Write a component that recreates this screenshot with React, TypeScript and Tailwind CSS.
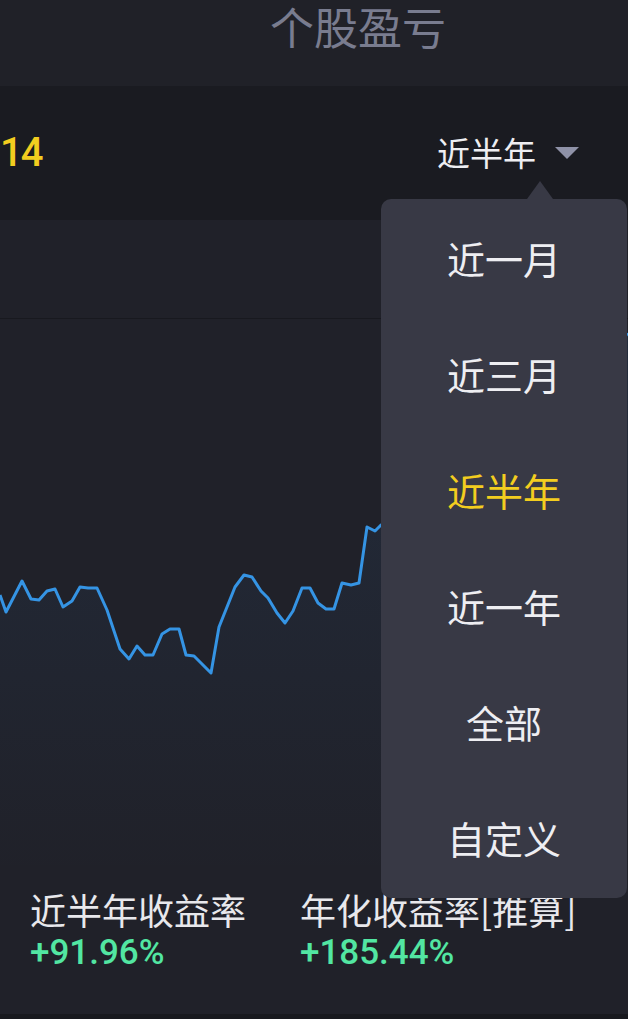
const cjk = "font-['Noto_Sans_CJK_SC',sans-serif]";
const num = "font-['Roboto','Noto_Sans_CJK_SC',sans-serif]";

// sampled from the curve, page coordinates (chart svg uses the same y)
const points: [number, number][] = [
  [0, 595], [6, 612], [22, 581], [31, 599], [39, 600], [47, 591], [55, 589], [63, 607],
  [72, 601], [80, 587], [88, 588], [97, 588], [107, 610], [120, 649], [129, 659], [137, 646],
  [145, 655], [153, 655], [162, 634], [170, 629], [179, 629], [186, 655], [194, 656], [202, 664],
  [211, 673], [219, 627], [227, 607], [235, 587], [244, 575], [252, 577], [261, 591], [268, 598],
  [277, 613], [285, 623], [293, 611], [302, 588], [310, 588], [318, 603], [326, 609], [334, 609],
  [342, 583], [351, 585], [359, 583], [367, 527], [375, 531], [381, 525], [390, 520], [400, 500],
  [410, 505], [420, 480], [430, 470], [440, 490], [450, 460], [460, 440], [470, 450], [480, 430],
  [490, 420], [500, 440], [510, 400], [520, 390], [530, 410], [540, 380], [550, 370], [560, 385],
  [570, 360], [580, 350], [590, 370], [600, 340], [610, 345], [620, 330], [628, 335],
];

const periods = ['近一月', '近三月', '近半年', '近一年', '全部', '自定义'];
const selected = '近半年';

function Chart() {
  const line = points.map(([x, y], i) => `${i ? 'L' : 'M'}${x} ${y}`).join(' ');
  const area = `${line} L628 878 L0 878 Z`;
  return (
    <svg viewBox="0 319 628 559" className="block w-full h-[559px]" preserveAspectRatio="none">
      <defs>
        <linearGradient id="fill" x1="0" y1="0" x2="0" y2="1">
          <stop offset="0%" stopColor="#3b8de6" stopOpacity="0.1" />
          <stop offset="100%" stopColor="#3b8de6" stopOpacity="0" />
        </linearGradient>
      </defs>
      <path d={area} fill="url(#fill)" />
      <path d={line} fill="none" stroke="#3594e4" strokeWidth="3" strokeLinejoin="round" />
    </svg>
  );
}

function PeriodMenu() {
  return (
    <div className="absolute left-[381px] top-[199px] w-[246px] rounded-[10px] bg-[#383945] pb-[3px]">
      <div className="absolute -top-[18px] left-[146px] w-0 h-0 border-l-[13px] border-r-[13px] border-b-[18px] border-l-transparent border-r-transparent border-b-[#383945]" />
      {periods.map((p) => (
        <div
          key={p}
          className={`h-[116px] flex items-center justify-center text-[38px] ${cjk} ${
            p === selected ? 'text-[#f3cd1f]' : 'text-[#eeeef2]'
          }`}
        >
          {p}
        </div>
      ))}
    </div>
  );
}

export default function App() {
  return (
    <div className="relative w-[628px] min-h-[1019px] bg-[#18191e] overflow-hidden">
      {/* title bar */}
      <div className="h-[86px] bg-[#202128] pl-[88px] flex justify-center">
        <h1 className={`text-[44px] leading-[52px] text-[#797c8f] ${cjk}`}>个股盈亏</h1>
      </div>

      {/* profit + period picker */}
      <div className="h-[134px] bg-[#1a1b21] flex items-center justify-between pr-[49px]">
        <span className={`text-[40px] font-medium tracking-[-2px] text-[#f3cd1f] ${num}`}>14</span>
        <div className="flex items-center gap-[19px]">
          <span className={`text-[33px] text-[#eeeef2] ${cjk}`}>近半年</span>
          <span className="w-0 h-0 border-l-[12px] border-r-[12px] border-t-[12px] border-l-transparent border-r-transparent border-t-[#8f92a8]" />
        </div>
      </div>

      {/* blank legend row */}
      <div className="h-[99px] bg-[#202129] border-b border-[#18191f]" />

      {/* chart + stats */}
      <div className="bg-[#202129]">
        <Chart />
        <div className="flex pl-[30px] pt-[10px] pb-[40px]">
          <div className="w-[270px]">
            <div className={`text-[36px] leading-[42px] text-[#e8e8ec] ${cjk}`}>近半年收益率</div>
            <div className={`mt-[2px] text-[35px] leading-[42px] font-medium text-[#52e6a2] ${num}`}>+91.96%</div>
          </div>
          <div>
            <div className={`text-[36px] leading-[42px] text-[#e8e8ec] ${cjk}`}>年化收益率[推算]</div>
            <div className={`mt-[2px] text-[35px] leading-[42px] font-medium text-[#52e6a2] ${num}`}>+185.44%</div>
          </div>
        </div>
      </div>

      <PeriodMenu />
    </div>
  );
}
